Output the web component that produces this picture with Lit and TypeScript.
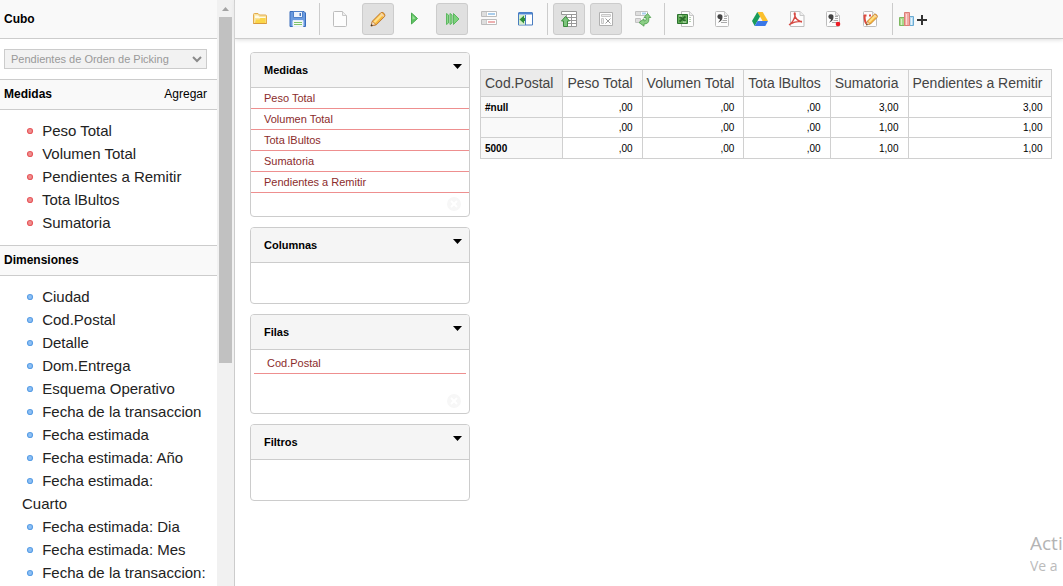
import { LitElement, html, svg, css, nothing, TemplateResult, SVGTemplateResult } from "lit";
import { customElement, property } from "lit/decorators.js";
import { classMap } from "lit/directives/class-map.js";

const page = svg`
  <path d="M.5 1.5q0-1 1-1h8l4 4v10q0 1-1 1h-11q-1 0-1-1z" fill="#fdfdfd" stroke="#bdbdbd"/>
  <path d="M9.500.500v4h4" fill="#eee" stroke="#c8c8c8"/>`;

const pencil = svg`
  <path d="M1 15l1.500-5 8-8q1.500-1.500 3.500.3 1.800 2 .3 3.500l-8 8z" fill="#f6b73c" stroke="#b9722a" stroke-width=".9"/>
  <path d="M3.500 10.500l8-8 1.600 1.600-8 8z" fill="#ffe08a"/>
  <path d="M10.300 3l2.900 3 1-1.200-2.800-3z" fill="#f3d3b0"/>
  <path d="M1 15l1.400-4.800 3.400 3.400z" fill="#f4dcc0" stroke="#b9722a" stroke-width=".6"/>
  <path d="M.800 15.200l.7-2.200 1.500 1.500z" fill="#333"/>`;

const quote = svg`
  <path d="M2.300 5.800a2.600 2.600 0 1 1 5.200.3q0 4.200-4.700 5.700 2.200-1.700 2.200-3.500-2.600-.2-2.700-2.500z" fill="#444"/>
  <path d="M9 5.500h3M9 7.500h3M7.500 9.500h4.500M6 11.500h6" stroke="#aaa"/>`;

const greenArrow = svg`<path d="M4.500 5.500l4 4.500h-2v5.500h-4v-5.500h-2z" fill="#7cc47c" stroke="#3c8c3c"/>`;

const icons: Record<string, SVGTemplateResult> = {
  open: svg`
    <path d="M.5 12.500v-9q0-1 1-1h3.500l1.500 1.500h6q1 0 1 1v7.500z" fill="#f9e3a0" stroke="#e3ab4c"/>
    <path d="M2 4.500h3l1.500 1.500h6v1h-10.500z" fill="#fffbe8"/>
    <path d="M2 12l1-3.500h3.500l1-1.500h5v5z" fill="#fbd648"/>
    <path d="M.5 12.500h13" stroke="#d99a3c"/>`,
  save: svg`
    <path d="M0 .500h14l1.500 1.500v13.500h-15.500z" fill="#6a9be0" stroke="#3a6dbb"/>
    <path d="M3.500.500h9v6h-9z" fill="#eef4fc" stroke="#4f80c8"/>
    <path d="M9.500 2h1.500v3h-1.500z" fill="#4877bd"/>
    <path d="M3 9.500h10v6h-10z" fill="#f6faf6" stroke="#e6eefa"/>
    <path d="M4 11.500h8M4 13.500h8" stroke="#7fc36b"/>`,
  create: page,
  edit: pencil,
  run: svg`<path d="M4.500 2l6 5.500-6 5.500z" fill="#5fc463" stroke="#4cab52"/><path d="M5.500 4.500l3 3-3 1z" fill="#9be09a"/>`,
  auto: svg`
    <path d="M2.500 2.500l2 1.500v8l-2 1.500zM6 2.500l2 1.500v8l-2 1.500z" fill="#8fd98d" stroke="#5cb860"/>
    <path d="M9.500 2.500l5.500 5.500-5.500 5.500z" fill="#7cd27c" stroke="#5cb860"/>`,
  nonempty: svg`
    <path d="M.5.500h4.500v5h-4.500zM5 .500h10.500v5h-10.500zM.5 8.500h4.500v5h-4.500zM5 8.500h10.500v5h-10.500z" fill="#fff" stroke="#bcbcbc"/>
    <path d="M1 1h4v4h-4zM1 9h4v4h-4z" fill="#dedede"/>
    <path d="M7 3h7" stroke="#a9cdec" stroke-width="2"/><path d="M7 11h7" stroke="#eeb0b0" stroke-width="2"/>`,
  sidebar: svg`
    <path d="M.5 2q0-.5.500-.5h13q.5 0 .5.500v12h-14z" fill="#fff" stroke="#4a7cc0"/>
    <path d="M1 1.500h13v2h-13z" fill="#4f86d2"/>
    <path d="M1 4h6v9.500h-6z" fill="#d5efc9"/>
    <path d="M7.500 4v10" stroke="#4a7cc0"/>
    <path d="M1.500 8.500l4.500-4v2.500h1v3h-1v2.500z" fill="#2f8f3a"/>`,
  parents: svg`
    <path d="M.5.500h15v3h-15z" fill="#fff" stroke="#999"/>
    <path d="M5.500 3.500h10v12h-10zM5.500 6.500h10M5.500 9.500h10M5.500 12.500h10M10.500 3.500v12" fill="#fff" stroke="#999"/>
    ${greenArrow}`,
  totals: svg`
    <path d="M1.500 1.500h13v13h-13z" fill="#fff" stroke="#b0b0b0"/>
    <path d="M3.500 3.500h9v2h-9zM3.500 7.500h2v5h-2z" fill="#ececec" stroke="#c8c8c8"/>
    <path d="M7.500 7.500l5 5M12.500 7.500l-5 5" stroke="#999"/>`,
  swap: svg`
    <path d="M.5.500h4.500v4h-4.500zM5 .500h7.500v4h-7.500zM.5 7.500h5v4h-5z" fill="#fff" stroke="#c2c2c2"/>
    <path d="M1 1h4v3h-4zM1 8h4v3h-4z" fill="#dedede"/><path d="M7 2.500h4" stroke="#a9cdec" stroke-width="2"/>
    <path d="M12.500 2.500l3.300 4h-2v2.500q0 3.800-4.800 4v2.200l-5-3.700 5-3.700v2.200q2-.2 2-1.500v-2h-2z" fill="#8ccf86" stroke="#4a9c4a" stroke-width=".8"/>`,
  excel: svg`
    <path d="M3.500.500h8l4 4v10q0 1-1 1h-11z" fill="#fdfdfd" stroke="#bdbdbd"/><path d="M11.500.500v4h4" fill="#eee" stroke="#c8c8c8"/>
    <path d="M11 6.500h2M11 8.500h2M11 10.500h2" stroke="#b5cfb0"/>
    <path d="M-.5 3.500h10v9h-10z" fill="#62ad57" stroke="#2d7230"/>
    <path d="M1.500 5.500l6 5M7.500 5.500l-6 5" stroke="#2a6a2a" stroke-width="1.800"/>
    <path d="M1 5h3M5 11h3" stroke="#d5edcf"/>`,
  csv: svg`${page}${quote}`,
  drive: svg`
    <path d="M5.300 1h5.400l5.300 9h-5.400z" fill="#fbc02d"/>
    <path d="M5.300 1l2.700 4.600-5.300 9.400-2.700-5z" fill="#1a9c5b"/>
    <path d="M5.500 10h10.500l-2.700 5h-10.600z" fill="#3b78e7"/>`,
  pdf: svg`
    <path d="M1.500.500h9.500l4 4v11h-13.500z" fill="#fdfdfd" stroke="#bdbdbd"/><path d="M11 .500v4h4" fill="#eee" stroke="#c8c8c8"/>
    <path d="M0 14q4.500-3 6-9 .5-3-.3-3t.1 2.500q1.200 5 7.200 6.500M1 13.200q5-3.200 12-2.700" fill="none" stroke="#d64a43" stroke-width="1.300"/>`,
  report: svg`${page}${quote}<circle cx="12" cy="13" r="2.300" fill="#ee1c25"/>`,
  annotate: svg`${page}<path d="M1.500 4q0 9 3 8.500M1 4.500h2.500M6 4.500h2" stroke="#dd4a3f" stroke-width="2" fill="none"/>
    <g transform="translate(2.500 2) scale(.8)">${pencil}</g>`,
};

const chart = svg`
  <path d="M.5 6.500h5v8h-5z" fill="#a9d98b" stroke="#7db860"/>
  <path d="M10.500 5.500h4v9h-4z" fill="#b5daf2" stroke="#6aabd2"/>
  <path d="M5.500 1.500h5v13h-5z" fill="#f2aaa5" stroke="#dc7d77"/>
  <path d="M7.500 3v11" stroke="#fbdad7"/><path d="M2.500 8v6" stroke="#d8f0c8"/><path d="M12.500 7v7" stroke="#e3f2fb"/>
  <path d="M18 9h10M23 4v10" stroke="#333" stroke-width="2"/>`;

@customElement("tool-bar")
export class ToolBar extends LitElement {
  static styles = css`
    :host { display: block; }
    .bar {
      display: flex; align-items: center; gap: 5px; padding: 3px 10px; box-sizing: border-box;
      background: #f9f9f9; border-bottom: 1px solid #ccc; box-shadow: 0 1px 4px #ddd;
    }
    .tool {
      display: flex; align-items: center; justify-content: center; flex: none;
      width: 32px; height: 32px; padding: 0; border: 1px solid transparent; border-radius: 3px; background: none;
    }
    .icon { overflow: visible; }
    .on { background: #e0e0e0; border-color: #ccc; }
    .sep { width: 1px; height: 32px; background: #ccc; flex: none; }
  `;

  private groups: [string, string, boolean][][] = [
    [["open", "Abrir", false], ["save", "Guardar", false]],
    [["create", "Nueva consulta", false], ["edit", "Editar", true], ["run", "Ejecutar", false],
      ["auto", "Ejecución automática", true], ["nonempty", "No vacíos", false], ["sidebar", "Panel lateral", false]],
    [["parents", "Ocultar padres", true], ["totals", "Totales", true], ["swap", "Intercambiar ejes", false]],
    [["excel", "Exportar XLS", false], ["csv", "Exportar CSV", false], ["drive", "Google Drive", false],
      ["pdf", "Exportar PDF", false], ["report", "Reporte", false], ["annotate", "Anotar", false]],
  ];

  render() {
    return html`<div class="bar" role="toolbar">
      ${this.groups.map((g) => html`${g.map(([id, label, on]) => html`
        <button class=${classMap({ tool: true, on })} title=${label} aria-label=${label}>
          <svg class="icon" width="16" height="16" fill="none">${icons[id]}</svg>
        </button>`)}<span class="sep"></span>`)}
      <button class="tool" title="Agregar gráfico" aria-label="Agregar gráfico"><svg width="30" height="16">${chart}</svg></button>
    </div>`;
  }
}

@customElement("axis-panel")
export class AxisPanel extends LitElement {
  @property() heading = "";
  @property({ type: Array }) items: string[] = [];
  @property({ type: Boolean }) inset = false;

  static styles = css`
    :host { display: block; }
    .panel { border: 1px solid #ccc; border-radius: 4px; overflow: hidden; background: #fff; font-size: 11px; }
    .head {
      display: flex; justify-content: space-between; align-items: flex-start; height: 34px;
      padding: 0 7px 0 13px; background: #f5f5f5; border-bottom: 1px solid #ccc;
    }
    .title { margin: 0; font-size: 11px; line-height: 34px; color: #000; }
    .toggle { border: 0; background: none; padding: 11px 0 0; line-height: 0; }
    .body { min-height: 40px; }
    .list { list-style: none; margin: 0; padding: 0; }
    .item { padding: 0 13px; line-height: 20px; border-bottom: 1px solid #ee8f8f; }
    .inset .list { padding: 3px 3px 0; }
    .link { color: #8b2c2c; text-decoration: none; }
    .foot { display: flex; justify-content: flex-end; padding: 4px 8px 5px; }
    .inset .foot { padding-top: 20px; }
    .clear { border: 0; background: none; padding: 0; line-height: 0; }
  `;

  render() {
    return html`<section class=${classMap({ panel: true, inset: this.inset })}>
      <div class="head">
        <h2 class="title">${this.heading}</h2>
        <button class="toggle" aria-label="Opciones de ${this.heading}"><svg width="9" height="5"><path d="M0 0h9l-4.500 5z"/></svg></button>
      </div>
      <div class="body">
        ${this.items.length ? html`
          <ul class="list">${this.items.map((t) => html`<li class="item"><a class="link" href="#">${t}</a></li>`)}</ul>
          <div class="foot"><button class="clear" aria-label="Limpiar ${this.heading}">
            <svg width="14" height="14"><circle cx="7" cy="7" r="7" fill="#f7f7f7"/><path d="M4 4l6 6M10 4l-6 6" stroke="#fff" stroke-width="2"/></svg>
          </button></div>` : nothing}
      </div>
    </section>`;
  }
}

@customElement("cube-sidebar")
export class CubeSidebar extends LitElement {
  static styles = css`
    :host { display: block; min-width: 0; }
    .side { display: grid; grid-template-columns: 1fr 17px; height: 100%; border-right: 1px solid #ccc; box-sizing: border-box; }
    .content { overflow: hidden; min-height: 0; font-size: 12px; color: #000; background: #fff; }
    .head {
      display: flex; justify-content: space-between; padding: 0 10px 0 4px; line-height: 29px;
      background: #f9f9f9; border: 1px solid #ccc; border-width: 1px 0;
    }
    .first { border-top: 0; line-height: 38px; }
    .title { margin: 0; font-size: 12px; }
    .add { color: #000; text-decoration: none; }
    .pick { display: grid; grid-template-columns: 1fr 20px; align-items: center; padding: 10px 10px 10px 4px; }
    .select {
      grid-area: 1 / 1 / 2 / 3; width: 100%; height: 20px; appearance: none; padding: 0 6px; margin: 0;
      border: 1px solid #ccc; border-radius: 0; background: #f2f2f2; color: #999; opacity: 1;
      font: 11px "Liberation Sans", Arial, sans-serif;
    }
    .chevron { grid-area: 1 / 2; justify-self: center; pointer-events: none; }
    .list { list-style: none; margin: 0; padding: 9px 8px 11px 22px; font-size: 15px; line-height: 23px; }
    .field { white-space: pre-line; }
    .link { color: #222; text-decoration: none; }
    .dot { display: inline-block; width: 16px; height: 16px; vertical-align: -3px; }
    .track { display: flex; flex-direction: column; align-items: center; background: #f1f1f1; }
    .up { height: 17px; width: 17px; flex: none; }
    .thumb { width: 13px; height: 59%; background: #c1c1c1; }
  `;

  private measures = ["Peso Total", "Volumen Total", "Pendientes a Remitir", "Tota lBultos", "Sumatoria"];
  private dimensions = [
    "Ciudad", "Cod.Postal", "Detalle", "Dom.Entrega", "Esquema Operativo", "Fecha de la transaccion",
    "Fecha estimada", "Fecha estimada: Año", "Fecha estimada:\nCuarto", "Fecha estimada: Dia",
    "Fecha estimada: Mes", "Fecha de la transaccion:",
  ];

  private list(names: string[], rim: string, core: string): TemplateResult {
    return html`<ul class="list">${names.map((n) => html`<li class="field"><a class="link" href="#"><svg class="dot"><circle cx="8" cy="8" r="2.500" fill=${core} stroke=${rim} stroke-width="1.200"/></svg> ${n}</a></li>`)}</ul>`;
  }

  render() {
    return html`<aside class="side">
      <div class="content">
        <div class="head first"><label class="title" for="cube"><b>Cubo</b></label></div>
        <div class="pick">
          <select class="select" id="cube" disabled><option>Pendientes de Orden de Picking</option></select>
          <svg class="chevron" width="10" height="7"><path d="M1 1l4 4 4-4" fill="none" stroke="#8a8a8a" stroke-width="2"/></svg>
        </div>
        <div class="head"><h2 class="title">Medidas</h2><a class="add" href="#">Agregar</a></div>
        ${this.list(this.measures, "#e8585c", "#ee9090")}
        <div class="head"><h2 class="title">Dimensiones</h2></div>
        ${this.list(this.dimensions, "#5a9fe6", "#8fc0f4")}
      </div>
      <div class="track" aria-hidden="true">
        <svg class="up"><path d="M5 11l3.500-4 3.500 4z" fill="#a3a3a3"/></svg>
        <div class="thumb"></div>
      </div>
    </aside>`;
  }
}

@customElement("result-table")
export class ResultTable extends LitElement {
  static styles = css`
    :host { display: block; }
    .table { border-collapse: collapse; color: #000; font-size: 10px; }
    .table th, .table td { border: 1px solid #d0d0d0; padding: 0 9px 0 4px; white-space: nowrap; }
    .col { height: 26px; background: #f9f9f9; color: #444; font-size: 14px; font-weight: 400; text-align: left; }
    .table .corner { background: #ebebeb; }
    .row { height: 20px; background: #f9f9f9; text-align: left; }
    .row:empty { height: 19px; }
    .num { text-align: right; background: #fff; }
  `;

  private columns = ["Cod.Postal", "Peso Total", "Volumen Total", "Tota lBultos", "Sumatoria", "Pendientes a Remitir"];
  private rows = [
    ["#null", ",00", ",00", ",00", "3,00", "3,00"],
    ["", ",00", ",00", ",00", "1,00", "1,00"],
    ["5000", ",00", ",00", ",00", "1,00", "1,00"],
  ];

  render() {
    return html`<table class="table">
      <thead><tr>${this.columns.map((c, i) => html`<th scope="col" class=${classMap({ col: true, corner: i === 0 })}>${c}</th>`)}</tr></thead>
      <tbody>${this.rows.map(([head, ...cells]) => html`<tr>
        ${head ? html`<th scope="row" class="row">${head}</th>` : html`<th scope="row" class="row"></th>`}
        ${cells.map((c) => html`<td class="num">${c}</td>`)}
      </tr>`)}</tbody>
    </table>`;
  }
}

@customElement("app-root")
export class AppRoot extends LitElement {
  static styles = css`
    :host {
      display: grid; grid-template-columns: 235px minmax(0, 1fr); grid-template-rows: minmax(0, 1fr);
      height: 100vh; position: relative; overflow: hidden;
      font-family: "Liberation Sans", Arial, sans-serif; background: #fff;
    }
    .work { display: flex; gap: 10px; padding: 13px 10px 0 15px; }
    .axes { display: flex; flex-direction: column; gap: 10px; flex: 0 0 220px; }
    .result { padding-top: 17px; }
    .notice {
      position: absolute; right: 0; bottom: 10px; width: 33px; overflow: hidden; white-space: nowrap;
      font: 14px/20px "Open Sans", "Noto Sans", sans-serif; color: #bbb; pointer-events: none;
    }
    .big { font-size: 19px; line-height: 26px; color: #b4b4b4; }
  `;

  render() {
    return html`
      <cube-sidebar></cube-sidebar>
      <main>
        <tool-bar></tool-bar>
        <div class="work">
          <div class="axes">
            <axis-panel heading="Medidas" .items=${["Peso Total", "Volumen Total", "Tota lBultos", "Sumatoria", "Pendientes a Remitir"]}></axis-panel>
            <axis-panel heading="Columnas"></axis-panel>
            <axis-panel heading="Filas" inset .items=${["Cod.Postal"]}></axis-panel>
            <axis-panel heading="Filtros"></axis-panel>
          </div>
          <result-table class="result"></result-table>
        </div>
      </main>
      <div class="notice"><div class="big">Acti</div><div>Ve a</div></div>
    `;
  }
}
